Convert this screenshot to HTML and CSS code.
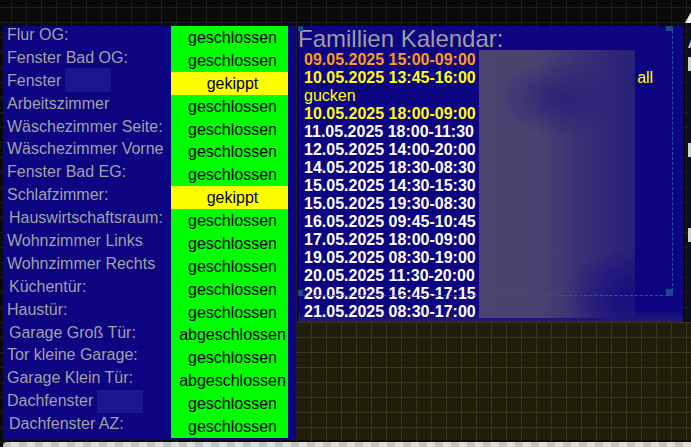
FILE: index.html
```html
<!DOCTYPE html>
<html lang="de">
<head>
<meta charset="utf-8">
<title>VIS</title>
<link rel="stylesheet" href="styles.css">
</head>
<body>
<div class="editor">
  <div class="top"></div>
  <div class="main">
    <div class="doors">
      <div class="labels">
        <div class="label">Flur OG:</div>
        <div class="label">Fenster Bad OG:</div>
        <div class="label">Fenster<span class="redact r1"></span></div>
        <div class="label">Arbeitszimmer</div>
        <div class="label">Wäschezimmer Seite:</div>
        <div class="label">Wäschezimmer Vorne</div>
        <div class="label">Fenster Bad EG:</div>
        <div class="label">Schlafzimmer:</div>
        <div class="label shift">Hauswirtschaftsraum:</div>
        <div class="label">Wohnzimmer Links</div>
        <div class="label">Wohnzimmer Rechts</div>
        <div class="label shift">Küchentür:</div>
        <div class="label">Haustür:</div>
        <div class="label shift">Garage Groß Tür:</div>
        <div class="label">Tor kleine Garage:</div>
        <div class="label">Garage Klein Tür:</div>
        <div class="label">Dachfenster<span class="redact r2"></span></div>
        <div class="label shift">Dachfenster AZ:</div>
      </div>
      <div class="states">
        <div class="state">geschlossen</div>
        <div class="state">geschlossen</div>
        <div class="state tilt">gekippt</div>
        <div class="state">geschlossen</div>
        <div class="state">geschlossen</div>
        <div class="state">geschlossen</div>
        <div class="state">geschlossen</div>
        <div class="state tilt">gekippt</div>
        <div class="state">geschlossen</div>
        <div class="state">geschlossen</div>
        <div class="state">geschlossen</div>
        <div class="state">geschlossen</div>
        <div class="state">geschlossen</div>
        <div class="state">abgeschlossen</div>
        <div class="state">geschlossen</div>
        <div class="state">abgeschlossen</div>
        <div class="state">geschlossen</div>
        <div class="state">geschlossen</div>
      </div>
    </div>
    <div class="right">
      <div class="upper">
        <div class="cal">
          <div class="cal-title">Famillien Kalendar:</div>
          <div class="entries">
            <div class="entry now">09.05.2025 15:00-09:00</div>
            <div class="entry soon">10.05.2025 13:45-16:00 <span class="desc"><span class="hidden-desc"></span>all</span></div>
            <div class="entry soon"><span class="desc">gucken</span></div>
            <div class="entry soon">10.05.2025 18:00-09:00</div>
            <div class="entry">11.05.2025 18:00-11:30</div>
            <div class="entry">12.05.2025 14:00-20:00</div>
            <div class="entry">14.05.2025 18:30-08:30</div>
            <div class="entry">15.05.2025 14:30-15:30</div>
            <div class="entry">15.05.2025 19:30-08:30</div>
            <div class="entry">16.05.2025 09:45-10:45</div>
            <div class="entry">17.05.2025 18:00-09:00</div>
            <div class="entry">19.05.2025 08:30-19:00</div>
            <div class="entry">20.05.2025 11:30-20:00</div>
            <div class="entry">20.05.2025 16:45-17:15</div>
            <div class="entry">21.05.2025 08:30-17:00</div>
          </div>
          <div class="blur"></div>
          <div class="sel">
            <div class="h tl"></div>
            <div class="h tr"></div>
            <div class="h bl"></div>
            <div class="h br"></div>
          </div>
        </div>
        <div class="gap"></div>
        <div class="side">
          <div class="side-a">A</div>
          <div class="chk c1"></div>
          <div class="chk c2"></div>
          <div class="chk c3"></div>
        </div>
      </div>
      <div class="olive"></div>
    </div>
  </div>
  <div class="strip"></div>
</div>
<div class="corner"></div>
</body>
</html>
```

FILE: styles.css
```css
html, body {
  margin: 0;
  padding: 0;
}

body {
  width: 691px;
  height: 447px;
  overflow: hidden;
  position: relative;
  font-family: "Liberation Sans", Arial, sans-serif;
  background-color: #0a0a0a;
  background-image:
    linear-gradient(to right, #1e1e1e 1px, transparent 1px),
    linear-gradient(to bottom, #1e1e1e 1px, transparent 1px);
  background-size: 15px 15px;
  background-position: 11px 7px;
  background-attachment: fixed;
}

.editor {
  display: flex;
  flex-direction: column;
  width: 691px;
}

.top {
  height: 26px;
}

.main {
  display: flex;
  height: 414px;
}

/* left door/window status panel */
.doors {
  flex: 0 0 293px;
  margin-left: 3px;
  display: flex;
  background: #0c0480;
}

.labels {
  flex: 0 0 168px;
  overflow: hidden;
}

.label {
  height: 22.9px;
  line-height: 18px;
  padding-left: 4px;
  font-size: 16px;
  color: #a1a1a6;
  white-space: nowrap;
}

.label.shift {
  padding-left: 6px;
}

.redact {
  display: inline-block;
  vertical-align: top;
  width: 46px;
  height: 24px;
  margin-bottom: -2px;
  background: #1b168e;
}

.redact.r1 {
  margin-left: 4px;
  margin-top: -4px;
}

.redact.r2 {
  margin-left: 4px;
  margin-top: -2px;
  height: 23px;
  margin-bottom: -3px;
}

.states {
  flex: 0 0 117px;
  height: 412px;
  overflow: hidden;
  background: #00ff00;
}

.state {
  height: 22.89px;
  line-height: 23px;
  padding-left: 6px;
  text-align: center;
  font-size: 16px;
  color: #000;
  white-space: nowrap;
}

.state.tilt {
  background: #ffff00;
}

/* right area */
.right {
  margin-left: 1px;
  flex: 1 1 0;
  min-width: 0;
  display: flex;
  flex-direction: column;
}

.upper {
  display: flex;
  height: 296px;
}

.cal {
  flex: 0 0 385px;
  margin-left: 1px;
  position: relative;
  overflow: hidden;
  background: linear-gradient(to bottom, #0c0480 0, #0c0480 284px, #241c74 296px);
}

.cal-title {
  height: 25px;
  line-height: 25px;
  font-size: 24px;
  color: #9d9d9f;
  white-space: nowrap;
}

.entries {
  padding-left: 6px;
}

.entry {
  height: 18px;
  line-height: 18px;
  font-size: 16px;
  font-weight: bold;
  color: #ffffff;
  white-space: nowrap;
}

.entry.now {
  color: #ff9a1c;
}

.entry.soon {
  color: #ffff00;
}

.desc {
  font-weight: normal;
}

.hidden-desc {
  display: inline-block;
  width: 157px;
}

.blur {
  position: absolute;
  left: 181px;
  top: 24px;
  width: 156px;
  height: 268px;
  background:
    radial-gradient(ellipse 60px 50px at 95% 92%, #160e80 0%, rgba(22, 14, 128, 0) 100%),
    radial-gradient(ellipse 70px 40px at 55% 18%, #2a2278 0%, rgba(42, 34, 120, 0) 100%),
    linear-gradient(to right, #4b4470 0%, #4a4371 38%, #3a3275 62%, #272079 100%);
}

.sel {
  position: absolute;
  left: 0;
  top: 0;
  width: 374px;
  height: 269px;
  border-right: 1px dashed #1d5aa5;
  border-bottom: 1px dashed #1d5aa5;
}

.h {
  position: absolute;
  background: #1a4c8c;
}

.h.tl {
  left: 0;
  top: 0;
  width: 5px;
  height: 5px;
}

.h.tr {
  right: -1px;
  top: 0;
  width: 7px;
  height: 5px;
}

.h.bl {
  left: 0;
  bottom: -1px;
  width: 5px;
  height: 6px;
}

.h.br {
  right: -1px;
  bottom: -1px;
  width: 7px;
  height: 7px;
}

.gap {
  flex: 0 0 5px;
}

.side {
  flex: 1 1 0;
  min-width: 0;
  overflow: hidden;
  background: #0f0f24;
  display: flex;
  flex-direction: column;
}

.side-a {
  margin-top: 4px;
  height: 22px;
  line-height: 22px;
  font-size: 20px;
  color: #d8d8e0;
}

.chk {
  flex: 0 0 14px;
  width: 14px;
  background: #cdd2cd;
}

.chk.c1 {
  margin-top: 5px;
}

.chk.c2 {
  margin-top: 72px;
}

.chk.c3 {
  margin-top: 71px;
}

.olive {
  height: 118px;
  background-color: #201e0b;
  background-image:
    linear-gradient(to right, #3a3717 1px, transparent 1px),
    linear-gradient(to bottom, #3a3717 1px, transparent 1px);
  background-size: 15px 15px;
  background-position: 11px 7px;
  background-attachment: fixed;
}

.strip {
  margin-top: 2px;
  margin-left: 3px;
  height: 10px;
  border-top-left-radius: 4px;
  background: repeating-conic-gradient(#e0e0d8 0 25%, #c5c5bd 0 50%) 0 0 / 16px 16px;
}

.corner {
  position: absolute;
  left: 685px;
  top: 12px;
  width: 6px;
  height: 11px;
  background: #f4f4f4;
  clip-path: polygon(100% 0, 100% 100%, 0 100%);
}
```
